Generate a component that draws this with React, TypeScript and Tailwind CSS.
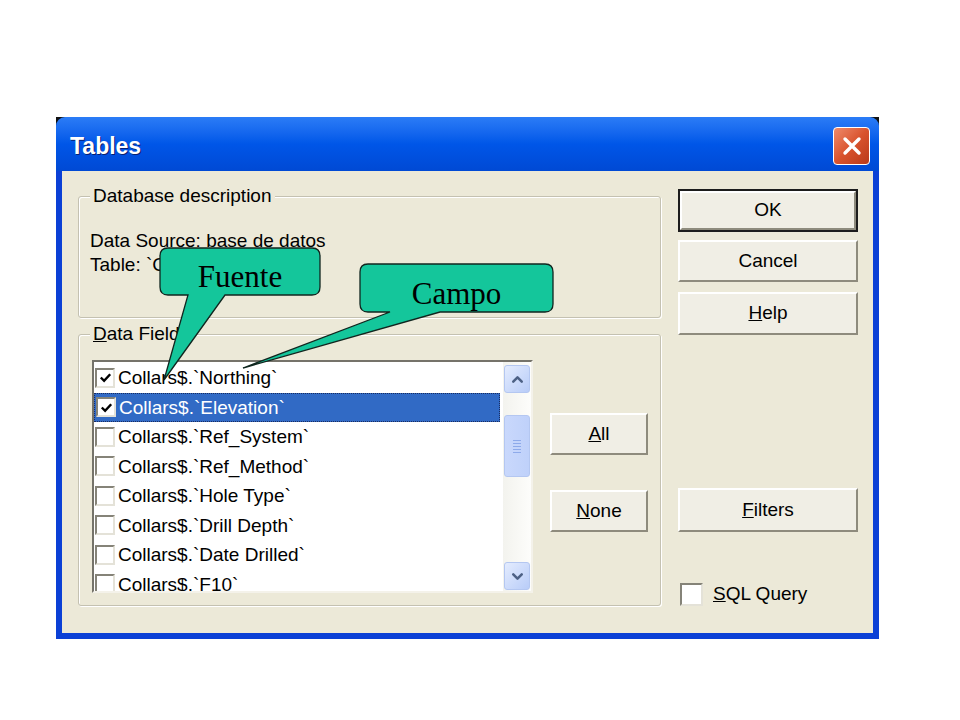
import type { ReactNode } from 'react';

const FIELDS: { name: string; checked?: boolean; selected?: boolean }[] = [
  { name: 'Northing', checked: true },
  { name: 'Elevation', checked: true, selected: true },
  { name: 'Ref_System' },
  { name: 'Ref_Method' },
  { name: 'Hole Type' },
  { name: 'Drill Depth' },
  { name: 'Date Drilled' },
  { name: 'F10' },
];

function WinButton({ children, className = '', isDefault = false }: { children: ReactNode; className?: string; isDefault?: boolean }) {
  const face = (
    <div className="flex h-full w-full items-center justify-center border-2 border-t-white border-l-white border-r-[#8e8b7d] border-b-[#8e8b7d] bg-[#f0eee5] text-[19px] text-black">
      {children}
    </div>
  );
  if (isDefault) return <div className={`border-2 border-[#1c1c1c] ${className}`}>{face}</div>;
  return <div className={className}>{face}</div>;
}

function CheckBox({ checked = false, className = '' }: { checked?: boolean; className?: string }) {
  return (
    <div className={`flex shrink-0 items-center justify-center border-2 border-t-[#858378] border-l-[#858378] border-r-[#e4e2d8] border-b-[#e4e2d8] bg-white ${className}`}>
      {checked && (
        <svg viewBox="0 0 16 16" className="h-[15px] w-[15px]">
          <path d="M3 8 L6.5 11.5 L13 4.5" fill="none" stroke="#000" strokeWidth={2.6} />
        </svg>
      )}
    </div>
  );
}

function ScrollArrow({ up }: { up?: boolean }) {
  return (
    <svg viewBox="0 0 24 24" className="h-[17px] w-[17px]">
      <path d={up ? 'M6 15 L12 9 L18 15' : 'M6 9 L12 15 L18 9'} fill="none" stroke="#4d6185" strokeWidth={3.6} strokeLinecap="round" strokeLinejoin="round" />
    </svg>
  );
}

function GroupBox({ title, className = '', children }: { title: ReactNode; className?: string; children: ReactNode }) {
  return (
    <fieldset className={`rounded-[3px] border border-[#c4c1b1] px-[11px] shadow-[inset_1px_1px_0_#fff,1px_1px_0_#fff] ${className}`}>
      <legend className="bg-[#ece9d8] px-[3px] text-[19px] leading-[22px] text-black">{title}</legend>
      {children}
    </fieldset>
  );
}

export default function App() {
  return (
    <div className="relative h-[720px] w-[960px] overflow-hidden bg-white pl-[56px] pt-[117px] font-['Liberation_Sans',Arial,sans-serif]">
      {/* ventana */}
      <div className="flex h-[522px] w-[823px] flex-col bg-[#111]">
        <div className="flex h-[54px] items-start justify-between rounded-t-[9px] bg-linear-to-b from-[#2b7cf6] via-[#0056e8] to-[#0049d4] pl-[14px] pr-[9px]">
          <span className="mt-[16px] text-[23px] font-bold leading-[26px] text-white [text-shadow:1px_1px_0_#0a2070]">Tables</span>
          <div className="mt-[10px] flex h-[38px] w-[37px] items-center justify-center rounded-[4px] border border-white bg-linear-to-br from-[#ee8a6a] via-[#d9532d] to-[#b9391a]">
            <svg viewBox="0 0 24 24" className="h-[24px] w-[24px]">
              <path d="M5 5 L19 19 M19 5 L5 19" stroke="#fff" strokeWidth={3.4} strokeLinecap="round" />
            </svg>
          </div>
        </div>

        <div className="flex flex-1 border-x-[6px] border-b-[6px] border-[#0b40d6] bg-[#ece9d8]">
          {/* columna izquierda */}
          <div className="ml-[16px] mt-[14px] w-[583px]">
            <GroupBox title="Database description" className="h-[133px]">
              <div className="mt-[22px] text-[19px] leading-[24px] text-black">
                <div>Data Source: base de datos</div>
                <div>Table: `Collars$`.</div>
              </div>
            </GroupBox>

            <GroupBox title={<><u>D</u>ata Fields</>} className="mt-[5px] h-[283px]">
              <div className="mt-[15px] ml-[2px] flex">
                <div className="flex h-[233px] w-[441px] border-2 border-t-[#75736a] border-l-[#75736a] border-r-[#f4f2ea] border-b-[#f4f2ea] bg-white">
                  <div className="flex-1 overflow-hidden pt-px">
                    {FIELDS.map(f => (
                      <div key={f.name}
                        className={`flex h-[29.5px] items-center pl-[1px] ${f.selected ? 'mr-[3px] border border-dotted border-[#1a2d60] bg-[#316ac5] text-white' : 'text-black'}`}>
                        <CheckBox checked={f.checked} className="h-[20px] w-[20px]" />
                        <span className="ml-[3px] whitespace-nowrap text-[19px] leading-none">{'Collars$.`' + f.name + '`'}</span>
                      </div>
                    ))}
                  </div>
                  {/* barra de desplazamiento */}
                  <div className="flex w-[28px] flex-col bg-linear-to-r from-[#f3f3ee] to-[#fdfdfb]">
                    <div className="mx-px mt-[3px] flex h-[28px] items-center justify-center rounded-[3px] border border-[#b4c7f1] bg-linear-to-br from-[#e4ecfe] to-[#b8ccf8]">
                      <ScrollArrow up />
                    </div>
                    <div className="mx-px mt-[22px] flex h-[62px] flex-col items-center justify-center gap-[2px] rounded-[3px] border border-[#b4c7f1] bg-linear-to-r from-[#c9d8fc] to-[#bfd1fa]">
                      {[0, 1, 2, 3, 4].map(i => <div key={i} className="h-px w-[8px] bg-[#8eaaea]" />)}
                    </div>
                    <div className="flex-1" />
                    <div className="mx-px mb-px flex h-[28px] items-center justify-center rounded-[3px] border border-[#b4c7f1] bg-linear-to-br from-[#e4ecfe] to-[#b8ccf8]">
                      <ScrollArrow />
                    </div>
                  </div>
                </div>

                <div className="ml-[17px] flex flex-col">
                  <WinButton className="mt-[53px] h-[42px] w-[98px]"><span><u>A</u>ll</span></WinButton>
                  <WinButton className="mt-[35px] h-[42px] w-[98px]"><span><u>N</u>one</span></WinButton>
                </div>
              </div>
            </GroupBox>
          </div>

          {/* columna derecha */}
          <div className="ml-[17px] mt-[18px] flex w-[180px] flex-col">
            <WinButton isDefault className="h-[43px]">OK</WinButton>
            <WinButton className="mt-[8px] h-[42px]">Cancel</WinButton>
            <WinButton className="mt-[10px] h-[43px]"><span><u>H</u>elp</span></WinButton>
            <WinButton className="mt-[153px] h-[44px]"><span><u>F</u>ilters</span></WinButton>
            <div className="mt-[48px] flex items-center">
              <CheckBox className="ml-[2px] h-[23px] w-[23px]" />
              <span className="ml-[10px] text-[19px] text-black"><u>S</u>QL Query</span>
            </div>
          </div>
        </div>
      </div>

      {/* llamadas */}
      <svg className="pointer-events-none absolute left-0 top-0 h-[720px] w-[960px]" viewBox="0 0 960 720">
        <path d="M168 248 H312 Q320 248 320 256 V287 Q320 295 312 295 H225 L164 380 L188 295 H168 Q160 295 160 287 V256 Q160 248 168 248 Z"
          fill="#14c69b" stroke="#10261f" strokeWidth={1.3} />
        <path d="M368 264 H545 Q553 264 553 272 V304 Q553 312 545 312 H440 L243 368 L390 312 H368 Q360 312 360 304 V272 Q360 264 368 264 Z"
          fill="#14c69b" stroke="#10261f" strokeWidth={1.3} />
      </svg>
      <div className="pointer-events-none absolute left-[160px] top-[248px] flex h-[47px] w-[160px] items-center justify-center pt-[10px] font-['Liberation_Serif',serif] text-[31px] leading-none text-black">
        Fuente
      </div>
      <div className="pointer-events-none absolute left-[360px] top-[264px] flex h-[48px] w-[193px] items-center justify-center pt-[10px] font-['Liberation_Serif',serif] text-[31px] leading-none text-black">
        Campo
      </div>
    </div>
  );
}
